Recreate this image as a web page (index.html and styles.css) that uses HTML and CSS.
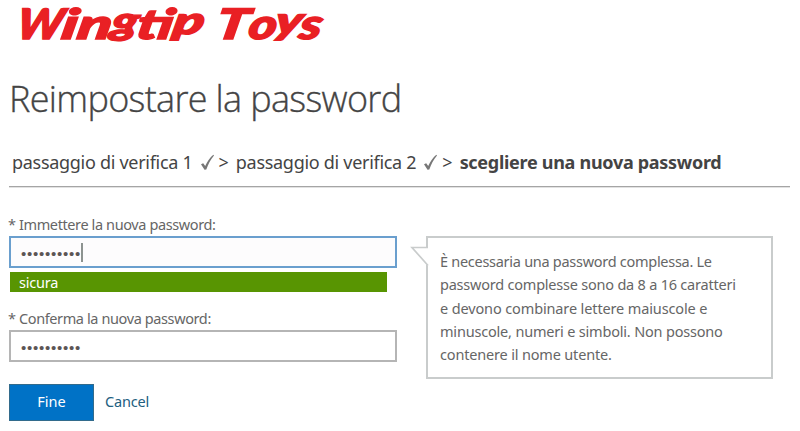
FILE: index.html
```html
<!DOCTYPE html>
<html lang="it">
<head>
<meta charset="utf-8">
<title>Reimpostare la password</title>
<link rel="stylesheet" href="styles.css">
</head>
<body>
<header>
  <svg class="logo" width="330" height="50" viewBox="0 0 330 50" role="img" aria-label="Wingtip Toys">
    <g class="logo-text" transform="translate(0 38.500) skewX(-10)">
      <text><tspan x="15" y="0" textLength="46" lengthAdjust="spacingAndGlyphs">W</tspan><tspan x="60" textLength="50" lengthAdjust="spacingAndGlyphs">in</tspan><tspan class="low" x="109" y="-5" textLength="27" lengthAdjust="spacingAndGlyphs">g</tspan><tspan x="135" y="0" textLength="36" lengthAdjust="spacingAndGlyphs">ti</tspan><tspan class="low" x="171" y="-5" textLength="31" lengthAdjust="spacingAndGlyphs">p</tspan></text>
      <text><tspan x="214" y="0" textLength="33" lengthAdjust="spacingAndGlyphs">T</tspan><tspan x="247" textLength="28" lengthAdjust="spacingAndGlyphs">o</tspan><tspan class="low" x="273" y="-5" textLength="27" lengthAdjust="spacingAndGlyphs">y</tspan><tspan x="298" y="0" textLength="22" lengthAdjust="spacingAndGlyphs">s</tspan></text>
    </g>
  </svg>
</header>
<h1><span>Reimpostare la password</span></h1>
<nav class="steps">
  <span class="step">passaggio di verifica 1</span>
  <svg class="check" width="15" height="17" viewBox="0 0 15 17"><path d="M1 10.200L3.200 9.200L5.200 12C7.300 7.500 10 3.500 13.300 .8L14 1.400C10.500 5.500 8.200 10 6.300 15.500L4.500 15.800Z"/></svg>
  <span class="sep">&gt;</span>
  <span class="step">passaggio di verifica 2</span>
  <svg class="check" width="15" height="17" viewBox="0 0 15 17"><path d="M1 10.200L3.200 9.200L5.200 12C7.300 7.500 10 3.500 13.300 .8L14 1.400C10.500 5.500 8.200 10 6.300 15.500L4.500 15.800Z"/></svg>
  <span class="sep">&gt;</span>
  <strong class="step current">scegliere una nuova password</strong>
</nav>
<main>
  <form class="fields">
    <label class="label-new"><span>* Immettere la nuova password:</span></label>
    <div class="field focused"><span class="dots">••••••••••</span><i class="caret"></i></div>
    <div class="strength"><span>sicura</span></div>
    <label class="label-confirm"><span>* Conferma la nuova password:</span></label>
    <div class="field"><span class="dots">••••••••••</span></div>
    <div class="actions"><button type="button">Fine</button><a>Cancel</a></div>
  </form>
  <aside class="tip">
    <svg class="pointer" width="20" height="22" viewBox="0 0 20 22"><path class="pointer-fill" d="M2 1.500H20V21L18 20Z"/><path class="pointer-line" d="M18 1.500H2L18 19.500"/></svg>
    <p><span class="l1">È necessaria una password complessa. Le</span><br><span class="l2">password complesse sono da 8 a 16 caratteri</span><br><span class="l3">e devono combinare lettere maiuscole e</span><br><span class="l4">minuscole, numeri e simboli. Non possono</span><br><span class="l5">contenere il nome utente.</span></p>
  </aside>
</main>
</body>
</html>
```
FILE: styles.css
```css
* { box-sizing: border-box; }
body {
  margin: 0;
  width: 800px;
  height: 431px;
  overflow: hidden;
  background: #fff;
  color: #444;
  font-family: "Noto Sans", "Open Sans", sans-serif;
}
header { height: 50px; }
.logo { display: block; overflow: visible; }
.logo-text {
  font: italic 900 42px Lato, sans-serif;
  fill: #e92024;
  stroke: #e92024;
  stroke-width: 1.5px;
}
.low { font-size: 38px; }
h1 {
  margin: 22px 0 0 9px;
  height: 55px;
  font: 300 36px/54px "Open Sans", sans-serif;
  white-space: nowrap;
}
h1 span { letter-spacing: -0.67px; -webkit-text-stroke: 0.35px #444; }
.steps {
  display: flex;
  align-items: center;
  height: 60px;
  margin: 0 10px 0 9px;
  padding: 11px 0 0 3px;
  border-bottom: 1px solid #a5a5a5;
  box-shadow: 0 1px #e2e2e2;
  font-size: 18px;
  line-height: 28px;
  white-space: nowrap;
}
.step { letter-spacing: -0.29px; }
.check { margin: 0 4px 0 7px; fill: #777; }
.sep { margin-right: 7px; }
main { display: flex; padding: 26px 0 0 9px; }
.fields { width: 388px; }
label { display: block; height: 23px; margin-left: -1px; font-size: 14.5px; line-height: 22px; color: #666; white-space: nowrap; }
label span { letter-spacing: -0.39px; }
.field {
  display: flex;
  align-items: center;
  height: 32px;
  padding-left: 10px;
  border: 2px solid #b5b5b5;
}
.focused { border: 2px solid #6a9fce; background: #fdfcfd; }
.dots { padding-top: 2px; font: 15px/15px "Liberation Sans", sans-serif; letter-spacing: 0.75px; color: #5c5555; }
.caret { width: 2px; height: 19px; background: #8d9390; }
.strength {
  width: 377px;
  height: 20px;
  margin: 4px 0 15px 1px;
  padding-left: 9px;
  background: #589502;
  color: #fff;
  font-size: 14.5px;
  line-height: 20px;
  letter-spacing: -0.2px;
}
.actions { display: flex; align-items: center; margin-top: 22px; font-size: 14.5px; }
button {
  width: 85px;
  height: 37px;
  padding: 0 0 3px;
  border: 1px solid #326b8c;
  background: #0072c6;
  color: #fff;
  font: 14.5px "Noto Sans", sans-serif;
}
.actions a { margin-left: 11px; padding-bottom: 4px; letter-spacing: -0.2px; color: #22607f; }
.tip {
  position: relative;
  width: 347px;
  height: 143px;
  margin: 23px 0 0 29px;
  padding: 12px 0 0 12px;
  border: 2px solid #c9cccc;
}
.pointer { position: absolute; left: -18px; top: 8px; }
.pointer-fill { fill: #fff; }
.pointer-line { fill: none; stroke: #c9cccc; stroke-width: 1.700px; }
.tip p { margin: 0; font-size: 14.5px; line-height: 23.3px; color: #666; white-space: nowrap; }
.l1 { letter-spacing: -0.28px; }
.l2 { letter-spacing: -0.22px; }
.l3 { letter-spacing: -0.13px; }
.l4 { letter-spacing: -0.19px; }
.l5 { letter-spacing: -0.17px; }
```
